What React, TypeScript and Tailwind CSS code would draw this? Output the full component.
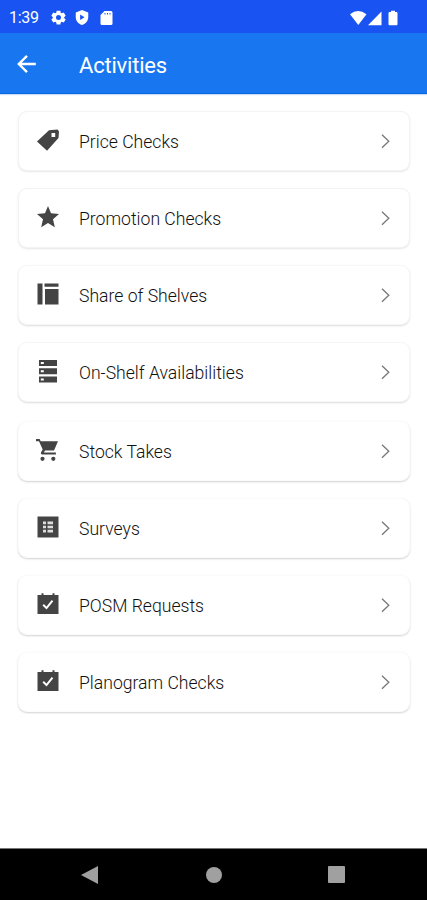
import type { ReactNode } from 'react';

const icons: Record<string, ReactNode> = {
  tag: (
    <path fillRule="evenodd" d="M12 1.200 20.500.5 22 2.500 21.500 9 10 21.800 0 12.500ZM14.500 4V8h3.700V4Z" />
  ),
  star: <path d="m11 0 3 7.300 8 .7-6 5.300 1.800 7.900L11 17l-6.800 4.200L6 13.300 0 8l8-.7Z" />,
  shelves: <path d="M.5.500h5v21h-5ZM7.500 .500h14v3.300h-14ZM8 6h13.500v15.500H8Z" />,
  servers: (
    <path
      fillRule="evenodd"
      d="M2 0h18v6H2ZM2 8.300h18v6H2ZM2 16.500h18v6H2ZM3.800 2v2h3V2ZM3.800 10.300v2h3v-2ZM3.800 18.500v2h3v-2Z"
    />
  ),
  cart: (
    <>
      <path d="M-1 0h3.600l1.100 2.200H21L17 11.500H8l-1.100 2.100h12v2H5.200q-2-.5-1-2.500l1.500-2.500L2 2.200h-3Z" />
      <circle cx="5.500" cy="19.800" r="2.100" />
      <circle cx="16.300" cy="19.800" r="2.100" />
    </>
  ),
  survey: (
    <>
      <path d="M.5.500h21v21H.5Z" />
      <path fill="#ddd" d="M6 5.500h3v2.800H6ZM10.500 5.500H16v2.800h-5.500ZM6 9.800h3v2.500H6ZM10.500 9.800H16v2.500h-5.500ZM6 13.800h3v2.700H6ZM10.500 13.800H16v2.700h-5.500Z" />
    </>
  ),
  task: (
    <>
      <path d="M.5 2H4.500V.3H6.500V2h9V.3h2V2h4v19H.5Z" />
      <path d="m6.200 11.800 3.300 3.300 6-7.500" fill="none" stroke="#fff" strokeWidth="2" />
    </>
  ),
};

const softShadow = 'border-[#f3f3f3] shadow-[0_1px_2px_#e6e6e6]';
const mediumShadow = 'border-[#f7f7f7] shadow-[0_1px_2px_#dcdcdc]';
const strongShadow = 'border-[#fbfbfb] shadow-[0_1px_2px_#d2d2d2]';

const groups = [
  [
    { label: 'Price Checks', icon: 'tag', edge: softShadow },
    { label: 'Promotion Checks', icon: 'star', edge: softShadow },
    { label: 'Share of Shelves', icon: 'shelves', edge: mediumShadow },
    { label: 'On-Shelf Availabilities', icon: 'servers', edge: mediumShadow },
  ],
  [
    { label: 'Stock Takes', icon: 'cart', edge: strongShadow },
    { label: 'Surveys', icon: 'survey', edge: strongShadow },
    { label: 'POSM Requests', icon: 'task', edge: strongShadow },
    { label: 'Planogram Checks', icon: 'task', edge: strongShadow },
  ],
];

export default function App() {
  return (
    <div className="flex h-[900px] w-[427px] flex-col overflow-hidden bg-white font-['Roboto',sans-serif]">
      <div className="flex h-[33px] shrink-0 items-center bg-[#1953f2] pl-[9px] pr-[27px] text-white">
        <span className="w-[42px] pt-[3px] text-[16px] tracking-[-0.3px]">1:39</span>
        <svg className="mt-[2px] size-[15px]" viewBox="0 0 24 24" fill="currentColor">
          <path fillRule="evenodd" d="m9 1-.6 3.200-1.700 1L3.600 4 .5 9.300 3 11.400v1.500L.5 15l3.100 5 3.100-1.100 1.700 1L9 23h6l.6-3.100 1.700-1 3.100 1.100 3.100-5-2.500-2.100v-1.500l2.500-2.100L20.400 4l-3.100 1.200-1.700-1L15 1ZM12 8a4 4 0 1 1 0 8 4 4 0 0 1 0-8Z" />
        </svg>
        <svg className="ml-[8px] mt-[2px] h-[15px] w-[16px]" viewBox="0 0 24 24" fill="currentColor">
          <path fillRule="evenodd" d="m12 0 10 4v7c0 6-4 11-10 13C6 22 2 17 2 11V4ZM9 7v9l7-4.500Z" />
        </svg>
        <svg className="ml-[10px] mt-[3px] h-[14px] w-[13px]" viewBox="0 0 13 14" fill="currentColor">
          <path fillRule="evenodd" d="M4.500 0H11q1.500 0 1.500 1.500v11Q12.500 14 11 14H2Q.5 14 .5 12.500V4ZM4.500 2v1.500h1V2ZM7 2v1.500h1V2ZM9.500 2v1.500h1V2Z" />
        </svg>
        <svg className="ml-auto mt-[2px] h-[16px] w-[50px]" viewBox="0 0 50 16" fill="currentColor">
          <path d="M0 4.200Q8 -2 16.500 4.200L8.300 15ZM18 15.200 31.500 1.500v13.700ZM38.500 3q0-1 1-1h1.500V.8h4V2H46.500q1 0 1 1v11.200q0 1-1 1h-7q-1 0-1-1Z" />
        </svg>
      </div>
      <header className="flex h-[61px] shrink-0 items-center border-b border-[#0867dc] bg-[#1976f1] pl-[17px] text-white shadow-[0_1px_1px_#c9dcf8]">
        <svg className="mt-[1px] size-[20px]" viewBox="0 0 20 20" fill="none" stroke="currentColor" strokeWidth="2.400">
          <path d="M18.800 10H2M10 1.800 1.800 10l8.200 8.200" />
        </svg>
        <h1 className="ml-[42px] pt-[4px] text-[22px] tracking-[-0.2px]">Activities</h1>
      </header>
      <main className="flex flex-1 flex-col gap-[19px] px-[18px] pt-[17px]">
        {groups.map((rows) => (
          <div key={rows[0].label} className="flex flex-col gap-[17px]">
            {rows.map((row) => (
              <button
                key={row.label}
                className={`flex h-[60px] w-[392px] shrink-0 items-center rounded-[9px] border bg-white pl-[18px] pr-[19px] text-left ${row.edge}`}
              >
                <svg className="mb-[2px] size-[22px] overflow-visible" viewBox="0 0 22 22" fill="#444">
                  {icons[row.icon]}
                </svg>
                <span className="ml-[20px] flex-1 pt-[3px] text-[17.600px] font-light text-[#111]">{row.label}</span>
                <svg className="h-[16px] w-[10px]" viewBox="0 0 10 16" fill="none" stroke="#777" strokeWidth="1.300">
                  <path d="m2 1.700 6.800 6.500L2 14.700" />
                </svg>
              </button>
            ))}
          </div>
        ))}
      </main>
      <nav className="flex h-[52px] shrink-0 items-center justify-between border-t border-[#777] bg-black pl-[81px] pr-[82px]">
        <svg className="h-[18px] w-[17px]" viewBox="0 0 17 18" fill="#a0a0a0">
          <path d="M0 9 17 0v18Z" />
        </svg>
        <span className="ml-[2px] size-[16px] rounded-full bg-[#a0a0a0]" />
        <span className="size-[17px] rounded-[1px] bg-[#a0a0a0]" />
      </nav>
    </div>
  );
}
